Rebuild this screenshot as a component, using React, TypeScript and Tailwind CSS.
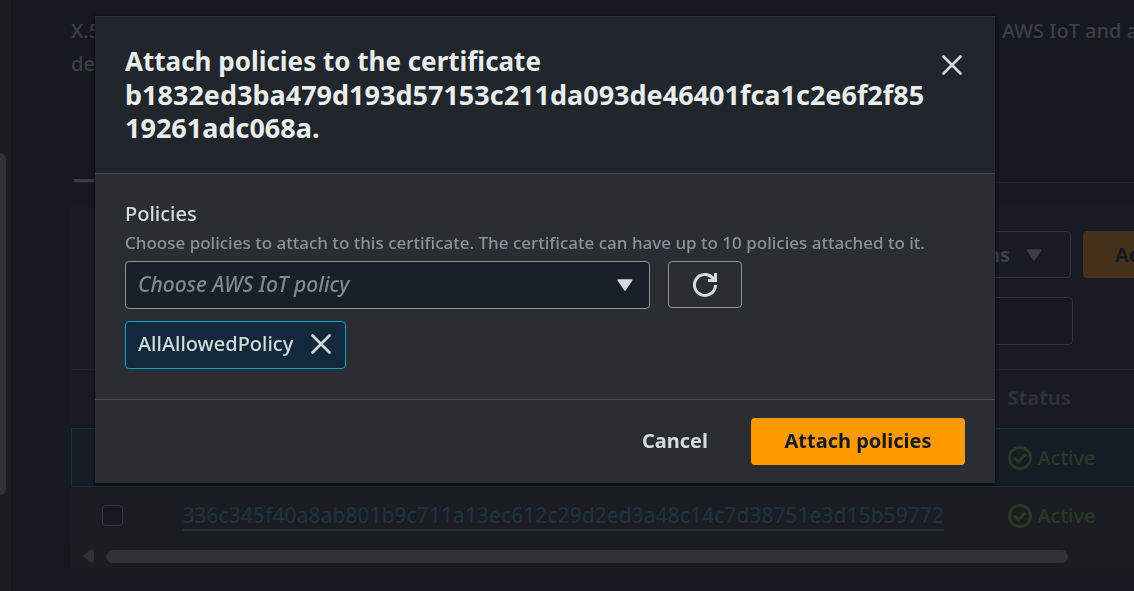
import React from "react";

const CloseIcon = () => (
  <svg viewBox="0 0 24 24" className="h-6 w-6" fill="none" stroke="#d5dbdb" strokeWidth="2.6" strokeLinecap="round" aria-hidden="true">
    <path d="M3.5 3.5l17 17M20.5 3.5l-17 17" />
  </svg>
);

const CaretIcon = ({ className }: { className: string }) => (
  <svg viewBox="0 0 16 12" className={className} fill="currentColor" stroke="currentColor" strokeWidth="1.5" strokeLinejoin="round" aria-hidden="true">
    <path d="M1.2 1h13.6L8 11z" />
  </svg>
);

const RefreshIcon = () => (
  <svg viewBox="0 0 24 24" className="h-6 w-6" fill="none" stroke="#d5dbdb" strokeWidth="3" aria-hidden="true">
    <path d="M22.5 12A10.5 10.5 0 1 1 19.5 4.6L22 7.5" />
    <path d="M22.5 0v7.5H15" />
  </svg>
);

const StatusIcon = () => (
  <svg viewBox="0 0 24 24" className="h-6 w-6 shrink-0" fill="none" stroke="currentColor" strokeWidth="2.8" aria-hidden="true">
    <circle cx="12" cy="12" r="10.5" />
    <path d="M6.5 11.5l4 4 7-7" />
  </svg>
);

const Status = () => (
  <span className="flex items-center gap-1.5 text-[#293a26]">
    <StatusIcon />
    Active
  </span>
);

const Box = ({ label }: { label: string }) => (
  <input type="checkbox" aria-label={label} className="block h-[21px] w-[21px] appearance-none rounded-sm border border-[#33373b] bg-[#16191f]" />
);

function CertificatesPage() {
  return (
    <div className="flex min-h-screen bg-[#161920] text-[20px] font-medium text-[#3d4044]">
      <div className="w-3 shrink-0 border-r border-[#131519] bg-[#1c1d20] pt-[153px]">
        <div className="h-[342px] w-1.5 rounded-r-md bg-[#313236]" />
      </div>
      <main className="min-w-0 flex-1 overflow-hidden pt-3.5 pl-[59px]">
        <div className="flex h-[169px] border-b border-[#1f2329] leading-[33px] whitespace-nowrap">
          <div className="flex w-[931px] shrink-0 flex-col">
            <p>X.509</p>
            <p>device</p>
            <div className="mt-auto ml-[3px] h-[3px] w-24 bg-[#3c3d42]" />
          </div>
          <p>AWS IoT and activated</p>
        </div>
        <section className="mt-6 bg-[#191b22]">
          <div className="flex gap-3 pt-6 pl-[800px] font-bold">
            <button className="flex h-[47px] w-[200px] shrink-0 items-center justify-end gap-4 rounded-sm border border-[#303439] pr-7">
              Actions
              <CaretIcon className="h-3 w-4" />
            </button>
            <button className="h-[47px] w-[240px] shrink-0 rounded-sm bg-[#46321a] pl-8 text-left text-[#16191f]">Add certificate</button>
          </div>
          <div className="pt-[19px] pl-[30px]">
            <input aria-label="Find certificates" className="block h-12 w-[972px] rounded-sm border border-[#303439] bg-[#161920] px-3" />
          </div>
          <table className="mt-6 w-full table-fixed border-collapse text-left">
            <thead>
              <tr className="h-[59px] border-t border-[#202328]">
                <th className="w-[111px]" />
                <th className="w-[825px]" />
                <th className="w-[260px] pb-0.5 font-bold text-[#2f3237]">Status</th>
              </tr>
            </thead>
            <tbody>
              <tr className="h-[58px] border border-[#113441] bg-[#151c26]">
                <td />
                <td />
                <td><Status /></td>
              </tr>
              <tr className="h-[58px] bg-[#1b1d23]">
                <td className="pl-[30px]"><Box label="Select certificate" /></td>
                <td>
                  <a href="#certificate" className="border-b-2 border-[#1d323e] text-[21px] leading-6 text-[#1d323e]">
                    336c345f40a8ab801b9c711a13ec612c29d2ed3a48c14c7d38751e3d15b59772
                  </a>
                </td>
                <td><Status /></td>
              </tr>
            </tbody>
          </table>
          <div className="flex h-[23px] items-center gap-3 bg-[#1c1d20] pl-3 text-[#313236]">
            <svg viewBox="0 0 11 14" className="h-3.5 w-[11px]" fill="currentColor" aria-hidden="true">
              <path d="M0 7L8 .5Q11-.5 11 2V12Q11 14.5 8 13.5z" />
            </svg>
            <div className="h-[13px] w-[962px] rounded-full bg-[#313236]" />
          </div>
        </section>
      </main>
    </div>
  );
}

function AttachDialog() {
  return (
    <div className="fixed inset-0 flex items-start pt-4 pr-[139px] pl-[95px]">
      <div role="dialog" aria-modal="true" aria-labelledby="dialog-title" className="w-full border-t border-[#2c3034] bg-[#2a2e33] text-[20px] font-medium text-[#d5dbdb] shadow-[0_1px_3px_1px_rgba(0,0,0,0.6)]">
        <header className="flex items-start justify-between border-b border-[#44494e] bg-[#21252c] pt-7 pr-[31px] pb-[29px] pl-[30px]">
          <h2 id="dialog-title" className="text-[26px] leading-[33px] font-bold whitespace-nowrap text-[#eaeded]">
            Attach policies to the certificate
            <span className="block text-[27px]">b1832ed3ba479d193d57153c211da093de46401fca1c2e6f2f85</span>
            <span className="block text-[27px]">19261adc068a.</span>
          </h2>
          <button aria-label="Close" className="mt-2"><CloseIcon /></button>
        </header>
        <div className="px-[30px] pt-[23px] pb-[30px]">
          <label htmlFor="policy" className="block leading-[33px]">Policies</label>
          <p className="mt-px text-[17px] leading-6 whitespace-nowrap text-[#879596]">
            Choose policies to attach to this certificate. The certificate can have up to 10 policies attached to it.
          </p>
          <div className="mt-1.5 flex items-start gap-[18px]">
            <div className="relative w-[525px]">
              <select id="policy" defaultValue="" className="block h-12 w-full appearance-none rounded-sm border border-[#879596] bg-[#1a2029] px-3 text-[21px] text-[#7f8a8b] italic">
                <option value="">Choose AWS IoT policy</option>
              </select>
              <CaretIcon className="pointer-events-none absolute top-[18px] right-[17px] h-3 w-4 text-[#d5dbdb]" />
            </div>
            <button aria-label="Refresh" className="flex h-[47px] w-[74px] items-center justify-center rounded-sm border border-[#879596]">
              <RefreshIcon />
            </button>
          </div>
          <div className="mt-3 flex h-12 w-[221px] items-center justify-between rounded-sm border border-[#00a1c9] bg-[#12293b] px-3 pb-0.5">
            AllAllowedPolicy
            <button aria-label="Remove AllAllowedPolicy"><CloseIcon /></button>
          </div>
        </div>
        <footer className="flex justify-end gap-3 border-t border-[#44494e] px-[30px] py-[18px] font-bold">
          <button className="h-[47px] px-[31px] pb-0.5">Cancel</button>
          <button className="h-[47px] w-[214px] rounded-sm bg-[#ff9900] pb-0.5 text-[#16191f]">Attach policies</button>
        </footer>
      </div>
    </div>
  );
}

export default function App() {
  return (
    <div className="h-screen overflow-hidden font-['Noto_Sans',sans-serif]">
      <CertificatesPage />
      <AttachDialog />
    </div>
  );
}
